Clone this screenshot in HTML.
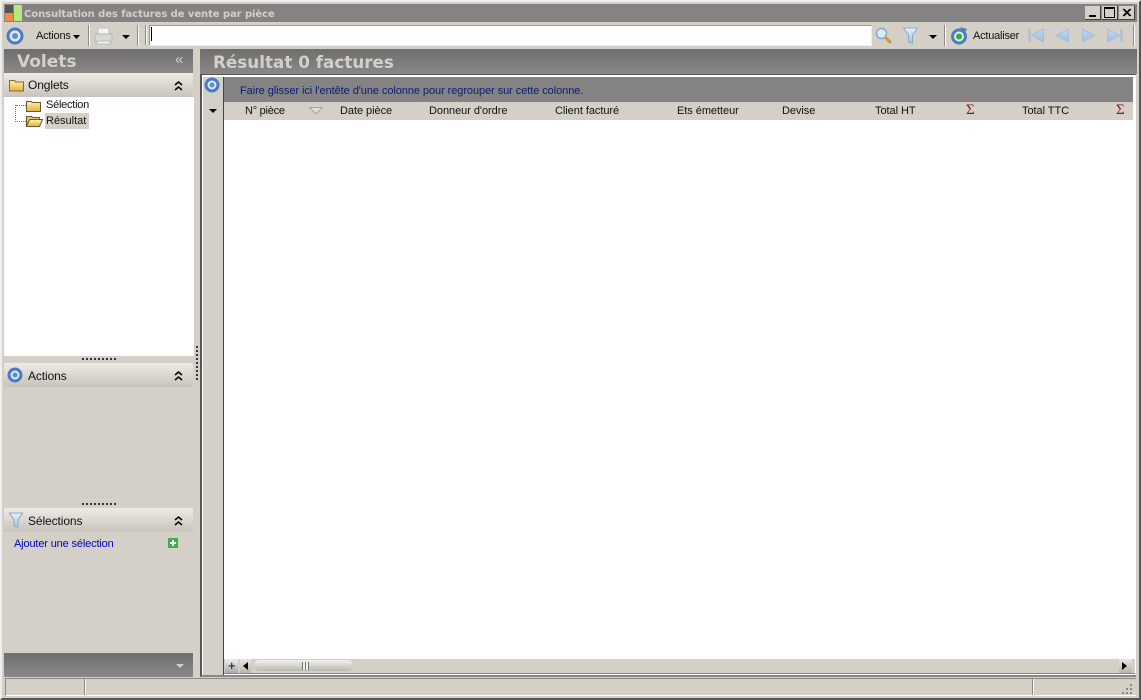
<!DOCTYPE html>
<html><head><meta charset="utf-8"><style>
html,body{margin:0;padding:0;width:1141px;height:700px;overflow:hidden;background:#d4d0c8}
body{position:relative;font:11px/13px "Liberation Sans",sans-serif;color:#111}
.a{position:absolute}
.t{position:absolute;white-space:nowrap}
.hd{position:absolute;left:4px;width:189px;height:24px;background:linear-gradient(#eeeae5,#c8c4bc)}
.gr{background:linear-gradient(#6f6e6e,#8a8888)}
.v{font-family:"DejaVu Sans",sans-serif;font-weight:bold;color:#d4d0c8}
.sep{position:absolute;top:25px;width:1px;height:21px;background:#8c8a86;border-right:1px solid #fff}
svg{position:absolute;overflow:visible}
.c{font-size:11px;top:105px;letter-spacing:-.05px}
.s{position:absolute;top:102px;color:#8f1420;font:15px/16px "Liberation Serif",serif}
</style></head><body>
<svg width="0" height="0" style="left:0;top:0"><defs>
<linearGradient id="fy" x1="0" y1="0" x2="0" y2="1"><stop offset="0" stop-color="#fdf2b8"/><stop offset="1" stop-color="#e3b23c"/></linearGradient>
<linearGradient id="bl" x1="0" y1="0" x2="0" y2="1"><stop offset="0" stop-color="#c4d8ee"/><stop offset="1" stop-color="#9dbde0"/></linearGradient>
<linearGradient id="fn" x1="0" y1="0" x2="0" y2="1"><stop offset="0" stop-color="#e8f0f8"/><stop offset="1" stop-color="#a9c2dc"/></linearGradient>
</defs></svg>
<div class="a" style="left:0;top:0;width:1141px;height:700px;box-sizing:border-box;border:2px solid #d4d0c8;border-top-color:#eee;border-left-color:#eee;border-right-color:#555;border-bottom-color:#555"></div>

<!-- title bar -->
<div class="a" style="left:4px;top:4px;width:1133px;height:18px;background:#858284"></div>
<div class="a" style="left:5px;top:5px;width:8px;height:8px;background:#555"></div>
<div class="a" style="left:5px;top:13px;width:8px;height:8px;background:#f08a4a"></div>
<div class="a" style="left:14px;top:5px;width:8px;height:16px;background:#b4e880"></div>
<div class="t v" style="left:24px;top:8px;font-size:10px;letter-spacing:-.07px">Consultation des factures de vente par pièce</div>
<div class="a" style="left:1085px;top:6px;width:15px;height:13px;background:#d4d0c8;border-right:1px solid #444;border-bottom:1px solid #444"><div class="a" style="left:4px;top:9px;width:7px;height:2px;background:#000"></div></div>
<div class="a" style="left:1102px;top:6px;width:15px;height:13px;background:#d4d0c8;border-right:1px solid #444;border-bottom:1px solid #444"><div class="a" style="left:2px;top:1px;width:9px;height:8px;border:1px solid #000;border-top-width:2px"></div></div>
<div class="a" style="left:1119px;top:6px;width:15px;height:13px;background:#d4d0c8;border-right:1px solid #444;border-bottom:1px solid #444"><svg width="15" height="13"><path d="M4 3l7 7M5 3l7 7M11 3l-7 7M12 3l-7 7" stroke="#000" fill="none"/></svg></div>

<!-- toolbar -->
<svg style="left:6px;top:27px" width="18" height="18"><circle cx="9" cy="9" r="7" fill="#dfe8f5" stroke="#4a7cc4" stroke-width="3"/><circle cx="9" cy="9" r="3" fill="#5b8ed6"/></svg>
<div class="t" style="left:36px;top:30px;letter-spacing:-.2px">Actions</div>
<svg style="left:73px;top:35px" width="8" height="5"><path d="M0 0h7l-3.500 4z" fill="#000"/></svg>
<div class="sep" style="left:88px"></div>
<svg style="left:94px;top:26px" width="19" height="20"><rect x="4" y="2" width="11" height="7" fill="#f4f4f4" stroke="#c0c0c0"/><rect x="1" y="8" width="17" height="8" rx="1" fill="#d8d8d8" stroke="#b4b4b4"/><rect x="3" y="15" width="13" height="3" fill="#f0f0f0" stroke="#bbb"/></svg>
<svg style="left:122px;top:35px" width="8" height="5"><path d="M0 0h8l-4 4z" fill="#000"/></svg>
<div class="sep" style="left:137px"></div>
<div class="sep" style="left:145px;height:20px"></div>
<div class="a" style="left:149px;top:25px;width:721px;height:19px;background:#fff;border:1px solid #a09c94;border-right-color:#eee;border-bottom-color:#eee"></div>
<div class="a" style="left:151px;top:27px;width:1px;height:14px;background:#000"></div>
<svg style="left:875px;top:27px" width="18" height="17"><path d="M10 10l6 6" stroke="#c89a30" stroke-width="3"/><circle cx="6.500" cy="6.500" r="5" fill="#dbe8f6" stroke="#8fa8c8" stroke-width="1.500"/></svg>
<svg style="left:903px;top:27px" width="15" height="17"><path d="M0.500 1h14l-5 7v8l-4-1v-7z" fill="url(#fn)" stroke="#8caacb"/></svg>
<svg style="left:929px;top:35px" width="8" height="5"><path d="M0 0h8l-4 4z" fill="#000"/></svg>
<div class="sep" style="left:944px"></div>
<svg style="left:950px;top:27px" width="18" height="18"><circle cx="9" cy="9.500" r="6.500" fill="#dfe8f2" stroke="#4b80bd" stroke-width="3"/><circle cx="9" cy="9.500" r="3" fill="#2fb03a"/><path d="M10 0l7 2-3 5z" fill="#4b80bd"/></svg>
<div class="t" style="left:973px;top:30px;letter-spacing:-.22px">Actualiser</div>
<svg style="left:1028px;top:28px" width="100" height="15" fill="url(#bl)" stroke="#a5bedb"><path d="M1.500 1v13" stroke-width="2"/><path d="M15.500 1v13l-12-6.500zM40.500 1v13l-12-6.500zM54.500 1l12 6.500-12 6.500zM79.500 1l12 6.500-12 6.500z"/><path d="M93.500 1v13" stroke-width="2"/></svg>
<div class="sep" style="left:1133px"></div>

<!-- left pane -->
<div class="a gr" style="left:4px;top:49px;width:189px;height:24px"></div>
<div class="t v" style="left:17px;top:51px;font-size:17px;line-height:22px">Volets</div>
<div class="t" style="left:175px;top:53px;font-size:15px;color:#d4d0c8">«</div>

<div class="hd" style="top:73px"></div>
<svg style="left:9px;top:78px" width="15" height="14"><path d="M0.500 2.500h5l1 1.500h8v9h-14z" fill="url(#fy)" stroke="#8a6a20"/></svg>
<div class="t" style="left:28px;top:79px;font-size:12px;letter-spacing:-.1px">Onglets</div>
<svg style="left:174px;top:81px" width="9" height="10"><path d="M1 4l3.500-3 3.500 3M1 9l3.500-3 3.500 3" fill="none" stroke="#000" stroke-width="1.500"/></svg>

<div class="a" style="left:4px;top:97px;width:190px;height:259px;background:#fff"></div>
<div class="a" style="left:15px;top:105px;height:16px;width:10px;border-left:1px dotted #777;border-bottom:1px dotted #777"></div>
<div class="a" style="left:16px;top:105px;width:10px;border-top:1px dotted #777"></div>
<svg style="left:26px;top:100px" width="16" height="13"><path d="M0.500 1.500h5l1 1h8v9h-14z" fill="url(#fy)" stroke="#6a5a30"/></svg>
<div class="t" style="left:46px;top:99px;letter-spacing:-.25px">Sélection</div>
<svg style="left:26px;top:115px" width="17" height="13"><path d="M0.500 1.500h5l1 1h7v2h-10l-3 7z" fill="#e8c668" stroke="#6a5a30"/><path d="M3.500 4.500h13l-3 7h-13z" fill="url(#fy)" stroke="#6a5a30"/></svg>
<div class="a" style="left:45px;top:113px;width:44px;height:16px;background:#d4d0c8"></div>
<div class="t" style="left:46px;top:115px">Résultat</div>

<div class="a" style="left:82px;top:358px;width:35px;height:2px;background:repeating-linear-gradient(90deg,#333 0 2px,transparent 2px 4px)"></div>
<div class="hd" style="top:363px"></div>
<svg style="left:7px;top:367px" width="16" height="16"><circle cx="8" cy="8" r="6" fill="#dfe8f5" stroke="#4a7cc4" stroke-width="3"/><circle cx="8" cy="8" r="2.500" fill="#5b8ed6"/></svg>
<div class="t" style="left:28px;top:370px;font-size:12px;letter-spacing:-.1px">Actions</div>
<svg style="left:174px;top:371px" width="9" height="10"><path d="M1 4l3.500-3 3.500 3M1 9l3.500-3 3.500 3" fill="none" stroke="#000" stroke-width="1.500"/></svg>

<div class="a" style="left:82px;top:503px;width:35px;height:2px;background:repeating-linear-gradient(90deg,#333 0 2px,transparent 2px 4px)"></div>
<div class="hd" style="top:508px"></div>
<svg style="left:9px;top:512px" width="14" height="16"><path d="M0.500 1h13l-4.500 7v7l-4-1v-6z" fill="url(#fn)" stroke="#8caacb"/></svg>
<div class="t" style="left:28px;top:515px;font-size:12px;letter-spacing:-.1px">Sélections</div>
<svg style="left:174px;top:516px" width="9" height="10"><path d="M1 4l3.500-3 3.500 3M1 9l3.500-3 3.500 3" fill="none" stroke="#000" stroke-width="1.500"/></svg>
<div class="t" style="left:14px;top:538px;color:#0000c8;letter-spacing:-.15px">Ajouter une sélection</div>
<div class="a" style="left:168px;top:538px;width:10px;height:10px;background:#3fae4a"></div>
<div class="a" style="left:172px;top:540px;width:2px;height:6px;background:#fff"></div>
<div class="a" style="left:170px;top:542px;width:6px;height:2px;background:#fff"></div>

<div class="a gr" style="left:4px;top:653px;width:189px;height:24px"></div>
<svg style="left:176px;top:664px" width="8" height="5"><path d="M0 0h8l-4 4z" fill="#d4d0c8"/></svg>

<!-- vertical splitter -->
<div class="a" style="left:196px;top:346px;width:2px;height:34px;background:repeating-linear-gradient(#333 0 2px,transparent 2px 4px)"></div>

<!-- right pane -->
<div class="a gr" style="left:200px;top:49px;width:937px;height:25px"></div>
<div class="t v" style="left:213px;top:51px;font-size:16.800px;line-height:22px">Résultat 0 factures</div>
<div class="a" style="left:200px;top:74px;width:936px;height:603px;box-sizing:border-box;background:#fff;border-left:2px solid #555;border-top:1px solid #555;border-bottom:2px solid #8a8884"></div>
<div class="a" style="left:203px;top:77px;width:20px;height:598px;background:#d4d0c8"></div>
<div class="a" style="left:223px;top:77px;width:1px;height:598px;background:#444"></div>
<svg style="left:204px;top:77px" width="16" height="16"><circle cx="8" cy="8" r="6" fill="#dfe8f5" stroke="#4a7cc4" stroke-width="3"/><circle cx="8" cy="8" r="2.500" fill="#5b8ed6"/></svg>
<div class="a" style="left:224px;top:77px;width:909px;height:25px;background:#858284"></div>
<div class="t" style="left:240px;top:85px;color:#0a1e70;letter-spacing:-.07px">Faire glisser ici l'entête d'une colonne pour regrouper sur cette colonne.</div>
<div class="a" style="left:224px;top:102px;width:909px;height:18px;background:#d4d0c8"></div>
<svg style="left:209px;top:109px" width="8" height="5"><path d="M0 0h8l-4 4z" fill="#000"/></svg>
<div class="t c" style="left:245px;letter-spacing:-.25px">N° pièce</div>
<svg style="left:309px;top:107px" width="14" height="8"><path d="M0.500 0.500h13l-6.500 6.500z" fill="#e0ddd7" stroke="#a8a59f"/></svg>
<div class="t c" style="left:340px">Date pièce</div>
<div class="t c" style="left:429px">Donneur d'ordre</div>
<div class="t c" style="left:555px">Client facturé</div>
<div class="t c" style="left:677px">Ets émetteur</div>
<div class="t c" style="left:782px">Devise</div>
<div class="t c" style="left:875px">Total HT</div>
<div class="s" style="left:966px">Σ</div>
<div class="t c" style="left:1022px">Total TTC</div>
<div class="s" style="left:1116px">Σ</div>

<!-- bottom scrollbar -->
<div class="a" style="left:224px;top:659px;width:911px;height:14px;background:#d4d0c8"></div>
<div class="a" style="left:225px;top:659px;width:13px;height:14px;background:linear-gradient(#eee,#aaa)"></div>
<div class="t" style="left:228px;top:659px;font-size:13px;color:#000">+</div>
<div class="a" style="left:240px;top:659px;width:11px;height:14px;background:linear-gradient(#e8e6e2,#b8b5ae)"></div>
<svg style="left:243px;top:662px" width="6" height="8"><path d="M5 0v8l-5-4z" fill="#000"/></svg>
<div class="a" style="left:254px;top:660px;width:99px;height:11px;border-radius:5px;background:linear-gradient(#f2f0ec,#bbb8b0)"></div>
<div class="a" style="left:302px;top:662px;width:7px;height:8px;background:repeating-linear-gradient(90deg,#777 0 1px,#eee 1px 3px)"></div>
<div class="a" style="left:1119px;top:659px;width:13px;height:14px;background:linear-gradient(#e8e6e2,#b8b5ae)"></div>
<svg style="left:1122px;top:662px" width="6" height="8"><path d="M0 0v8l5-4z" fill="#000"/></svg>
<div class="a" style="left:224px;top:673px;width:911px;height:1px;background:#8a8884"></div>

<!-- status bar -->
<div class="a" style="left:5px;top:678px;width:1131px;height:18px;box-sizing:border-box;border-top:1px solid #8a8884;border-left:1px solid #8a8884;border-bottom:1px solid #fff"></div>
<div class="a" style="left:84px;top:679px;width:1px;height:16px;background:#8a8884;border-right:1px solid #fff"></div>
<div class="a" style="left:1032px;top:679px;width:1px;height:16px;background:#8a8884;border-right:1px solid #fff"></div>
<svg style="left:1122px;top:684px" width="12" height="11" fill="#8a8884"><path d="M8 0h2v2H8zM8 4h2v2H8zM4 4h2v2H4zM8 8h2v2H8zM4 8h2v2H4zM0 8h2v2H0z"/></svg>
</body></html>
